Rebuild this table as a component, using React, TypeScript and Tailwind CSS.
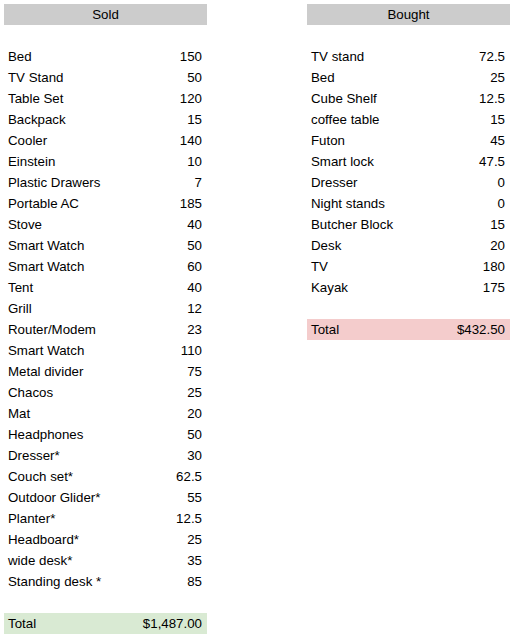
const sold: [string, string][] = [
  ["Bed", "150"],
  ["TV Stand", "50"],
  ["Table Set", "120"],
  ["Backpack", "15"],
  ["Cooler", "140"],
  ["Einstein", "10"],
  ["Plastic Drawers", "7"],
  ["Portable AC", "185"],
  ["Stove", "40"],
  ["Smart Watch", "50"],
  ["Smart Watch", "60"],
  ["Tent", "40"],
  ["Grill", "12"],
  ["Router/Modem", "23"],
  ["Smart Watch", "110"],
  ["Metal divider", "75"],
  ["Chacos", "25"],
  ["Mat", "20"],
  ["Headphones", "50"],
  ["Dresser*", "30"],
  ["Couch set*", "62.5"],
  ["Outdoor Glider*", "55"],
  ["Planter*", "12.5"],
  ["Headboard*", "25"],
  ["wide desk*", "35"],
  ["Standing desk *", "85"],
]

const bought: [string, string][] = [
  ["TV stand", "72.5"],
  ["Bed", "25"],
  ["Cube Shelf", "12.5"],
  ["coffee table", "15"],
  ["Futon", "45"],
  ["Smart lock", "47.5"],
  ["Dresser", "0"],
  ["Night stands", "0"],
  ["Butcher Block", "15"],
  ["Desk", "20"],
  ["TV", "180"],
  ["Kayak", "175"],
]

const Sheet = ({ title, rows, total, totalBg }: { title: string; rows: [string, string][]; total: string; totalBg: string }) => {
  return (
    <div className="flex flex-col w-[203px]">
      {/* header */}
      <div className="h-[21px] pt-px bg-[#cccccc] flex items-center justify-center">{title}</div>
      <div className="h-[21px]" />
      {rows.map(([name, amount], i) => (
        <div key={i} className="h-[21px] pt-px flex items-center justify-between pl-[4px] pr-[5px]">
          <span>{name}</span>
          <span>{amount}</span>
        </div>
      ))}
      <div className="h-[21px]" />
      <div className={`h-[21px] pt-px flex items-center justify-between pl-[4px] pr-[5px] ${totalBg}`}>
        <span>Total</span>
        <span>{total}</span>
      </div>
    </div>
  )
}

const App = () => {
  return (
    <div className="flex gap-[100px] pl-[4px] pt-[4px] text-[13.3px] text-black bg-white min-h-[641px] font-['Liberation_Sans',Arial,sans-serif]">
      <Sheet title="Sold" rows={sold} total="$1,487.00" totalBg="bg-[#d9ead3]" />
      <Sheet title="Bought" rows={bought} total="$432.50" totalBg="bg-[#f4cccc]" />
    </div>
  )
}

export default App
